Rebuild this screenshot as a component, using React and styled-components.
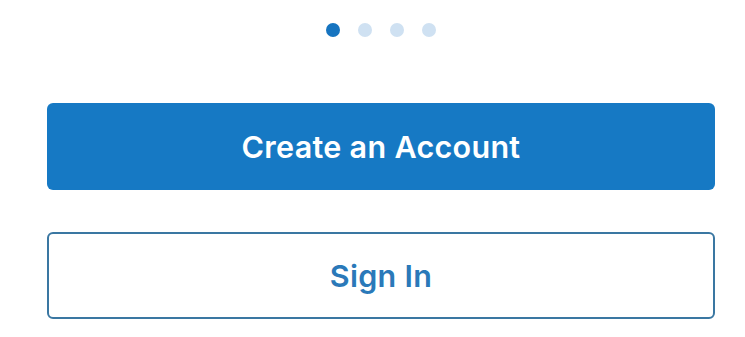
import React from "react";
import styled, { createGlobalStyle } from "styled-components";

const GlobalStyle = createGlobalStyle`
  html, body {
    margin: 0;
    padding: 0;
    background: #ffffff;
  }
  body {
    font-family: Inter, "Noto Sans", "Liberation Sans", sans-serif;
  }
`;

const Page = styled.div`
  width: 745px;
  height: 337px;
  box-sizing: border-box;
  padding: 23px 30px 0 47px;
  display: flex;
  flex-direction: column;
`;

const Dots = styled.div`
  display: flex;
  justify-content: center;
  gap: 18px;
  margin-bottom: 66px;
`;

const Dot = styled.span`
  width: 14px;
  height: 14px;
  border-radius: 50%;
  background: ${(p) => (p.$active ? "#1674c0" : "#cfe1f2")};
`;

const Button = styled.button`
  width: 668px;
  height: 87px;
  box-sizing: border-box;
  border-radius: 6px;
  font-family: Inter, "Noto Sans", "Liberation Sans", sans-serif;
  font-size: 30.5px;
  font-weight: 600;
  letter-spacing: 0.3px;
  cursor: pointer;
  display: flex;
  align-items: center;
  justify-content: center;
  padding: 0;
  background: ${(p) => (p.$primary ? "#1679c4" : "#ffffff")};
  color: ${(p) => (p.$primary ? "#ffffff" : "#2a79b9")};
  border: ${(p) => (p.$primary ? "none" : "2px solid #3a77a2")};
  & + & {
    margin-top: 42px;
  }
`;

const dots = [true, false, false, false];

export default function App() {
  return (
    <>
      <GlobalStyle />
      <Page>
        <Dots>
          {dots.map((active, i) => (
            <Dot key={i} $active={active} />
          ))}
        </Dots>
        <Button $primary>Create an Account</Button>
        <Button>Sign In</Button>
      </Page>
    </>
  );
}
